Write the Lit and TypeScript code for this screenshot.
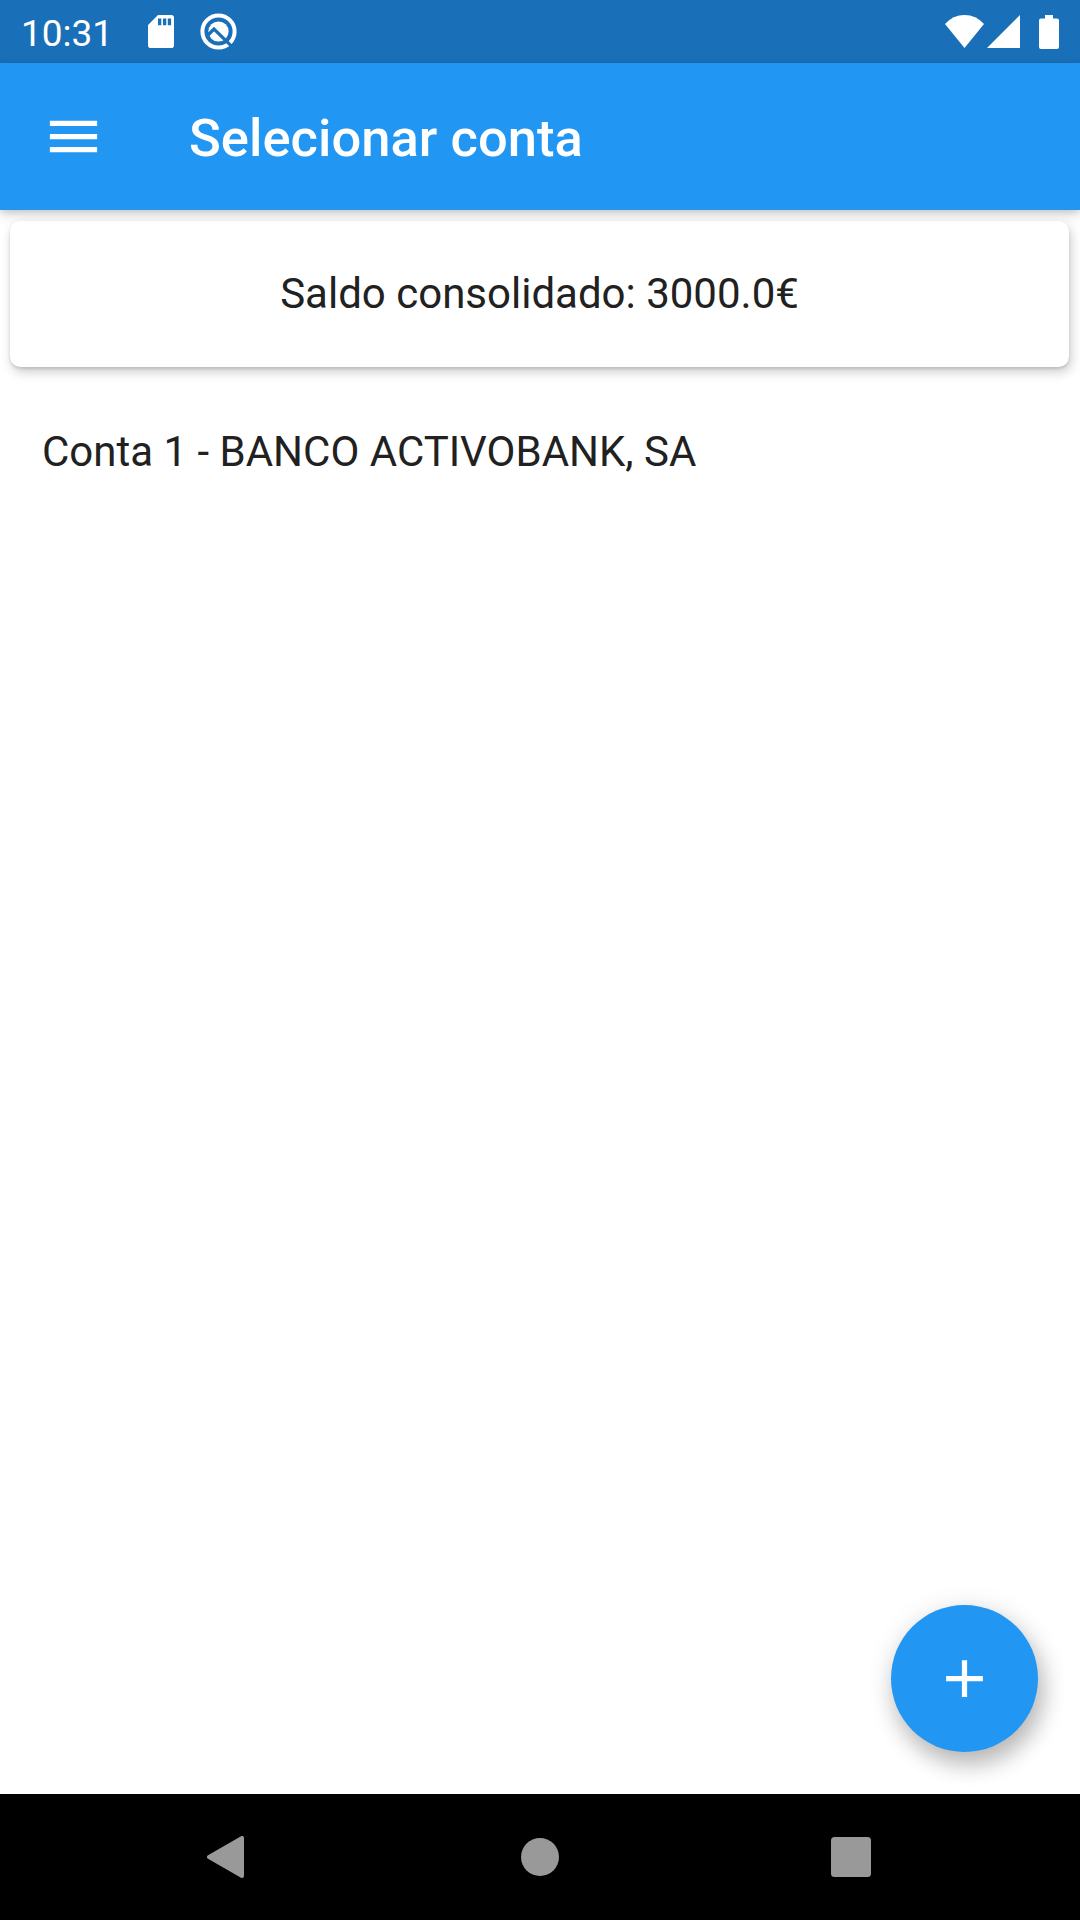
import { LitElement, html, css } from "lit";
import { customElement } from "lit/decorators.js";

@customElement("status-bar")
class StatusBar extends LitElement {
  static styles = css`
    :host { display: flex; align-items: center; justify-content: space-between; height: 63px; box-sizing: border-box; background: #1a70b8; color: #fff; padding: 0 21px; }
    .left, .right { display: flex; align-items: center; }
    .time { font-size: 37px; line-height: 43px; margin-top: 3px; width: 127px; letter-spacing: 0; }
    svg { display: block; }
    .sd { margin-right: 26px; }
    .signal { margin: 0 19px 0 3px; }
  `;
  render() {
    return html`
      <div class="left">
        <span class="time">10:31</span>
        <svg class="sd" width="26" height="33" viewBox="0 0 26 33">
          <path fill="#fff" fill-rule="evenodd" d="M10 0H23.2Q26 0 26 2.8V30.2Q26 33 23.2 33H2.8Q0 33 0 30.2V10ZM10 3.5V10.3H13.3V3.5ZM15 3.5V10.3H18.3V3.5ZM19.8 3.5V10.3H23.1V3.5Z"/>
        </svg>
        <svg width="37" height="37" viewBox="0 0 37 37">
          <circle cx="18.5" cy="18.5" r="16.1" fill="none" stroke="#fff" stroke-width="4"/>
          <circle cx="18.5" cy="18.5" r="10.1" fill="#fff"/>
          <path d="M7 23L14 16L32 33.6" fill="none" stroke="#1a70b8" stroke-width="3.2"/>
        </svg>
      </div>
      <div class="right">
        <svg width="39" height="33" viewBox="0 0 39 33"><path fill="#fff" d="M19.5 33L0 9Q8 0 19.5 0T39 9Z"/></svg>
        <svg class="signal" width="33" height="33" viewBox="0 0 33 33"><path fill="#fff" d="M33 0V33H0Z"/></svg>
        <svg width="20" height="34" viewBox="0 0 20 34"><path fill="#fff" d="M6 0H14V3.5H18Q20 3.5 20 5.5V32Q20 34 18 34H2Q0 34 0 32V5.5Q0 3.5 2 3.5H6Z"/></svg>
      </div>`;
  }
}

@customElement("nav-bar")
class NavBar extends LitElement {
  static styles = css`
    :host { display: grid; grid-template-columns: 1fr auto 1fr; align-items: center; height: 126px; box-sizing: border-box; background: #000; padding: 0 209px 0 207px; }
    svg { display: block; }
    .home { margin: 0 0 1px 2px; }
    .recent { justify-self: end; }
  `;
  render() {
    return html`
      <svg width="37" height="42" viewBox="0 0 37 42"><path fill="#999" stroke="#999" stroke-width="4" stroke-linejoin="round" d="M35 2V40L2 21Z"/></svg>
      <svg class="home" width="38" height="38" viewBox="0 0 38 38"><circle cx="19" cy="19" r="19" fill="#999"/></svg>
      <svg class="recent" width="40" height="40" viewBox="0 0 40 40"><rect width="40" height="40" rx="3.5" fill="#999"/></svg>`;
  }
}

@customElement("app-root")
class AppRoot extends LitElement {
  static styles = css`
    :host { display: flex; flex-direction: column; position: relative; width: 1080px; height: 1920px; overflow: hidden; background: #fff; font-family: Roboto, sans-serif; color: #212121; }
    .app-bar { display: flex; align-items: center; height: 147px; box-sizing: border-box; padding: 0 42px; gap: 84px; background: #2196f3; color: #fff; box-shadow: 0 5px 12px rgba(0,0,0,.14), 0 2px 6px rgba(0,0,0,.12); }
    .app-bar svg { display: block; }
    .title { margin: 2px 0 0; font-size: 52.5px; line-height: 62px; font-weight: 500; letter-spacing: 0.03px; }
    .content { flex: 1; display: flex; flex-direction: column; padding: 10.5px 11px 10px 10px; }
    .card { display: flex; align-items: center; justify-content: center; height: 146.5px; box-sizing: border-box; padding-bottom: 1px; border-radius: 10.5px; background: #fff; font-size: 42px; line-height: 49px; box-shadow: 0 2px 3px rgba(0,0,0,.12), 2px 5px 12px rgba(0,0,0,.2); }
    .row { display: flex; align-items: center; height: 147px; margin-top: 11px; padding: 0 32px; font-size: 42px; line-height: 49px; }
    .fab { position: absolute; right: 42px; bottom: 168px; width: 147px; height: 147px; padding: 0; border: 0; border-radius: 50%; background: #2196f3; display: flex; align-items: center; justify-content: center; box-shadow: 5px 13px 22px rgba(0,0,0,.22), 2px 5px 30px rgba(0,0,0,.12); }
  `;
  render() {
    return html`
      <status-bar></status-bar>
      <header class="app-bar">
        <svg width="63" height="63" viewBox="0 0 24 24"><path fill="#fff" d="M3 18h18v-2H3v2zm0-5h18v-2H3v2zm0-7v2h18V6H3z"/></svg>
        <h1 class="title">Selecionar conta</h1>
      </header>
      <main class="content">
        <section class="card">Saldo consolidado: 3000.0€</section>
        <div class="row">Conta 1 - BANCO ACTIVOBANK, SA</div>
      </main>
      <button class="fab" aria-label="Adicionar">
        <svg width="63" height="63" viewBox="0 0 24 24"><path fill="#fff" d="M19 13h-6v6h-2v-6H5v-2h6V5h2v6h6v2z"/></svg>
      </button>
      <nav-bar></nav-bar>`;
  }
}
